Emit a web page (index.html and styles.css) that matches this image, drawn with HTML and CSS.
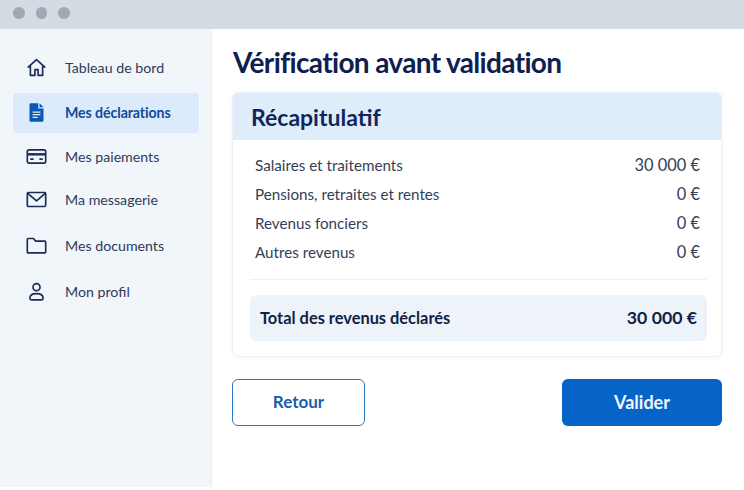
FILE: index.html
```html
<!DOCTYPE html>
<html lang="fr">
<head>
<meta charset="utf-8">
<title>Vérification avant validation</title>
<link rel="stylesheet" href="styles.css">
</head>
<body>
<div class="window">
  <header class="titlebar"><span class="dot"></span><span class="dot"></span><span class="dot"></span></header>
  <div class="body">
    <nav class="sidebar">
      <a class="item"><svg class="icon" viewBox="0 0 24 24"><path d="M2.500 11.500 12 3l9.500 8.500M5 9.500V21h5.200v-6.500h3.600V21H19V9.500"/></svg><span>Tableau de bord</span></a>
      <a class="item active"><svg class="icon" viewBox="0 0 24 24"><path class="fill" d="M5.500 1.500h8.500v6h6v13.500a1.500 1.500 0 0 1-1.500 1.500h-13A1.500 1.500 0 0 1 4 21V3A1.500 1.500 0 0 1 5.500 1.500Z"/><path class="fill" d="M15.500 1.500 20 6h-4.500Z"/><path class="lines" d="M7.500 11.500h9M7.500 14.500h9M7.500 17.500h6"/></svg><span>Mes déclarations</span></a>
      <a class="item"><svg class="icon" viewBox="0 0 24 24"><rect x="1.500" y="4.500" width="21" height="15" rx="2"/><path class="thick" d="M1.500 9.500h21"/><path d="M5.500 15h2.500M16 15h2.500"/></svg><span>Mes paiements</span></a>
      <a class="item up"><svg class="icon" viewBox="0 0 24 24"><rect x="1.500" y="4" width="21" height="16" rx="1.500"/><path d="M2 5l10 8.500L22 5"/></svg><span>Ma messagerie</span></a>
      <a class="item down"><svg class="icon" viewBox="0 0 24 24"><path d="M1.500 5a1 1 0 0 1 1-1h6l2.500 3h10.500a1 1 0 0 1 1 1v11.500a1 1 0 0 1-1 1h-19a1 1 0 0 1-1-1Z"/></svg><span>Mes documents</span></a>
      <a class="item down"><svg class="icon" viewBox="0 0 24 24"><circle cx="12" cy="7" r="4"/><path d="M4.500 19.500c0-3.500 3-5 7.500-5s7.500 1.500 7.500 5v.5a1.500 1.500 0 0 1-1.500 1.500H6A1.500 1.500 0 0 1 4.500 20Z"/></svg><span>Mon profil</span></a>
    </nav>
    <main class="main">
      <h1 class="title">Vérification avant validation</h1>
      <section class="card">
        <h2 class="card-head">Récapitulatif</h2>
        <div class="card-body">
          <div class="rows">
            <div class="row"><span>Salaires et traitements</span><span class="val">30 000 €</span></div>
            <div class="row"><span>Pensions, retraites et rentes</span><span class="val">0 €</span></div>
            <div class="row"><span>Revenus fonciers</span><span class="val">0 €</span></div>
            <div class="row"><span>Autres revenus</span><span class="val">0 €</span></div>
          </div>
          <div class="total"><span>Total des revenus déclarés</span><span class="total-val">30 000 €</span></div>
        </div>
      </section>
      <div class="actions">
        <button class="btn back">Retour</button>
        <button class="btn ok">Valider</button>
      </div>
    </main>
  </div>
</div>
</body>
</html>
```
FILE: styles.css
```css
* { box-sizing: border-box; }
html, body { margin: 0; padding: 0; }
body { width: 744px; height: 490px; overflow: hidden; background: #fff; font-family: "Lato", "Liberation Sans", sans-serif; color: #2a3654; }
.window { width: 744px; height: 487px; display: flex; flex-direction: column; }
.titlebar { height: 29px; flex: none; background: #d4dbe3; display: flex; align-items: center; gap: 11px; padding: 0 0 3px 13px; }
.dot { width: 11.500px; height: 11.500px; border-radius: 50%; background: #a1a9b4; }
.body { flex: 1; display: flex; min-height: 0; }
.sidebar { width: 212px; flex: none; background: #f1f6fb; border-right: 1px solid #edf1f6; padding: 16px 12px 0 13px; display: flex; flex-direction: column; }
.item { height: 45px; display: flex; align-items: center; gap: 18px; padding-left: 13px; font-size: 14.200px; color: #2e3a58; border-radius: 4px; }
.item .icon { width: 21px; height: 21px; flex: none; fill: none; stroke: #1b2d56; stroke-width: 1.900; stroke-linejoin: round; stroke-linecap: round; }
.item.active { height: 40px; margin: 3px 0 1px; padding-bottom: 1px; color: #0f4c9c; font-weight: 700; background: #dcebfb; letter-spacing: -0.100px; }
.item.up { margin-top: -2px; }
.item.down { margin-top: 1px; }
.item .fill { fill: #0b57b5; stroke: none; }
.item .thick { stroke-width: 2.800; stroke-linecap: butt; }
.item .lines { stroke: #e4eefb; stroke-width: 1.500; stroke-linecap: butt; }
.main { flex: 1; padding: 16px 22px 0 20px; display: flex; flex-direction: column; }
.title { margin: 0 0 13px; padding-left: 1px; font-size: 28px; line-height: 34px; font-weight: 700; color: #0f2050; letter-spacing: -0.650px; }
.card { border: 1px solid #edf0f4; border-radius: 6px; overflow: hidden; background: #fff; height: 265px; box-shadow: 0 1px 4px rgba(30, 60, 110, 0.04); }
.card-head { margin: 0; height: 47px; background: #dfedfb; padding-left: 18px; font-size: 23px; line-height: 48px; font-weight: 700; color: #10275c; }
.card-body { padding: 10px 14px 0 17px; }
.rows { border-bottom: 1px solid #edf0f4; padding: 0 7px 13px 5px; }
.row { height: 29px; display: flex; justify-content: space-between; align-items: center; font-size: 15.200px; color: #333e58; }
.val { font-size: 16.400px; }
.total { margin-top: 15px; height: 46px; border-radius: 6px; background: #edf3f8; display: flex; justify-content: space-between; align-items: center; padding: 0 10px 2px; font-size: 16.400px; font-weight: 700; color: #101f48; }
.total-val { font-size: 17.700px; }
.actions { display: flex; justify-content: space-between; margin-top: 22px; }
.btn { width: 133px; height: 47px; border-radius: 6px; font-family: inherit; font-size: 17px; font-weight: 700; padding: 0 0 2px; }
.back { background: #fff; border: 1.500px solid #2b78c2; color: #1a5eac; }
.ok { width: 160px; background: #0663c7; border: none; color: #f2f7fd; font-size: 18px; }
```
